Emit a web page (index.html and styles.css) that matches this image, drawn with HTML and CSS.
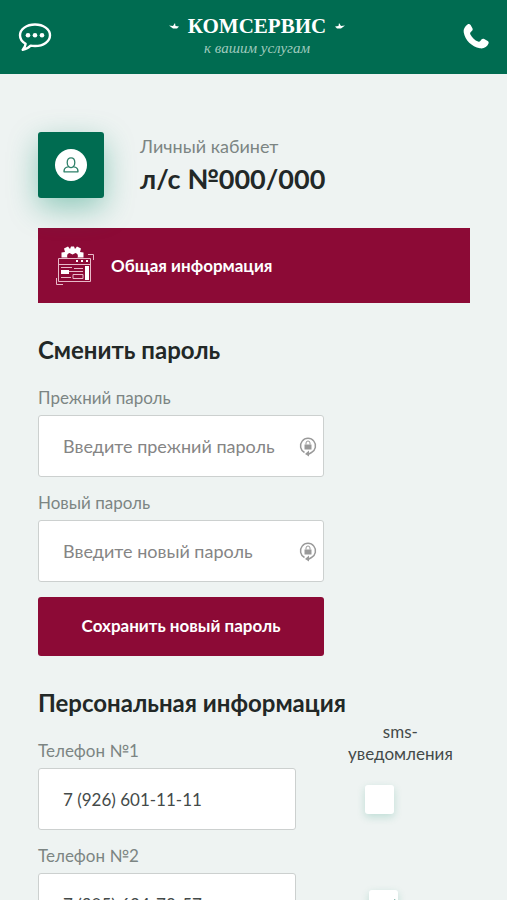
FILE: index.html
```html
<!DOCTYPE html>
<html lang="ru">

<head>
    <meta charset="UTF-8">
    <meta name="viewport" content="width=device-width, initial-scale=1.0">
    <title>Личный кабинет</title>
    <link rel="stylesheet" href="styles.css">
</head>

<body>
    <header class="header">
        <button class="header-btn" type="button" aria-label="Чат">
            <svg width="34" height="30" viewBox="0 0 34 30">
                <path d="M17 2.500C8.500 2.500 2 7.200 2 13.300c0 3.600 2.200 6.600 5.600 8.500-.2 2.200-1.300 4.200-2.900 6 3.200-.4 6-1.800 8-4.200 1.400.3 2.800.4 4.300.4 8.500 0 15-4.600 15-10.700S25.500 2.500 17 2.500z" fill="none" stroke="#fff" stroke-width="2.400" stroke-linejoin="round" />
                <circle cx="10" cy="13.200" r="2.300" fill="#fff" />
                <circle cx="17" cy="13.200" r="2.300" fill="#fff" />
                <circle cx="24" cy="13.200" r="2.300" fill="#fff" />
            </svg>
        </button>
        <a class="logo" href="#">
            <span class="logo-name">
                <svg width="10" height="6" viewBox="0 0 10 6"><path d="M0 2.500l4 .5 2-3 .5 3 3.500.5L8 5.500H4z" fill="#fff" /></svg>
                КОМСЕРВИС
                <svg width="10" height="6" viewBox="0 0 10 6"><path d="M10 2.500L6 3 4 0l-.5 3-3.500.5 2 2h4z" fill="#fff" /></svg>
            </span>
            <span class="logo-text">к вашим услугам</span>
        </a>
        <a class="header-btn" href="tel:" aria-label="Позвонить">
            <svg width="28" height="28" viewBox="0 0 28 28">
                <path d="M5.500 1.600C6.500.8 7.800 1 8.600 2.100l1.800 3.200c.6 1.100.3 2-.6 2.700L8.600 9.200c-.6.6-.6 1.400-.2 2.200 1.800 3.400 4.400 5.700 7.700 7.200.9.400 1.600.2 2.200-.5l1.100-1.500c.7-.9 1.800-1.100 2.800-.6l3.500 2c1 .6 1.200 1.600.8 2.600-1.200 3.300-4.800 5.400-8.600 4.700C9.500 23.700 3.200 17.300 1.700 9.300 1.100 6.300 3 3.400 5.500 1.600z" fill="#fff" />
            </svg>
        </a>
    </header>

    <main class="main">
        <div class="profile">
            <div class="profile-icon">
                <svg width="32" height="32" viewBox="0 0 32 32">
                    <circle cx="16" cy="16" r="16" fill="#fff" />
                    <path d="M12.200 13.500c0-3 1.600-4.700 3.800-4.700s3.800 1.700 3.800 4.700c0 2-.6 3.400-1.400 4.100l2.600.9c1.300.5 2 2 2 4.300H9c0-2.300.7-3.800 2-4.300l2.600-.9c-.8-.7-1.400-2.100-1.400-4.100zM13.600 17.600c1.500 1.300 3.300 1.300 4.800 0" fill="none" stroke="#2f8069" stroke-width="1.300" stroke-linejoin="round" />
                </svg>
            </div>
            <div>
                <div class="profile-label">Личный кабинет</div>
                <h1 class="profile-number">л/с №000/000</h1>
            </div>
        </div>

        <a class="tab" href="#">
            <svg width="40" height="40" viewBox="0 0 40 40">
                <path d="M6.500 11.500V6.500L10 6 9 2.500 13 .5l2 2.500 1-2.500h3L20 3l2-2.500 4 2L25 6l3.500.5v5h-6c1-2 0-4-2-4.500l-3 1.500-3-1.500c-2 .5-3 2.500-2 4.500z" fill="#fff" />
                <g fill="none" stroke="#e8b9c8">
                    <path d="M3.500 12.500h32v23h-32zM3.500 18.500h32M33 8.500h5.500V14M1.500 32v6.500H8" />
                    <path d="M6 21.500h11M19 22.500h9M6 31.500h10M18 28.500h10v4H18zM12 25.500h16" />
                </g>
                <path d="M6 24h8v4H6zM30 20h4v14h-4zM21 14h2v2h-2zM26 14h2v2h-2zM31 14h2v2h-2z" fill="#fff" />
            </svg>
            Общая информация
        </a>

        <form>
            <h2 class="title">Сменить пароль</h2>
            <div class="field password">
                <label for="old-password">Прежний пароль</label>
                <input type="password" id="old-password" placeholder="Введите прежний пароль">
                <svg class="lock" width="18" height="22" viewBox="0 0 18 22">
                    <path d="M5.500 16.500a7.500 7.500 0 1 1 7 0L9 18.500" fill="none" stroke="#999" stroke-width="1.500" />
                    <path d="M10 14.500v6L6 18z" fill="#999" />
                    <path d="M5.500 8.500h7v5h-7z" fill="#999" />
                    <path d="M7 8.500V7a2 2 0 0 1 4 0v1.500" fill="none" stroke="#999" />
                </svg>
            </div>
            <div class="field password">
                <label for="new-password">Новый пароль</label>
                <input type="password" id="new-password" placeholder="Введите новый пароль">
                <svg class="lock" width="18" height="22" viewBox="0 0 18 22">
                    <path d="M5.500 16.500a7.500 7.500 0 1 1 7 0L9 18.500" fill="none" stroke="#999" stroke-width="1.500" />
                    <path d="M10 14.500v6L6 18z" fill="#999" />
                    <path d="M5.500 8.500h7v5h-7z" fill="#999" />
                    <path d="M7 8.500V7a2 2 0 0 1 4 0v1.500" fill="none" stroke="#999" />
                </svg>
            </div>
            <button class="save" type="submit">Сохранить новый пароль</button>
        </form>

        <form>
            <h2 class="title title-personal">Персональная информация</h2>
            <div class="row">
                <div class="field">
                    <label for="phone1">Телефон №1</label>
                    <input type="tel" id="phone1" value="7 (926) 601-11-11">
                </div>
                <div class="sms">
                    <label for="sms1">sms-<br>уведомления</label>
                    <input type="checkbox" id="sms1">
                </div>
            </div>
            <div class="row row-next">
                <div class="field">
                    <label for="phone2">Телефон №2</label>
                    <input type="tel" id="phone2" value="7 (905) 624-78-57">
                </div>
                <div class="sms">
                    <input type="checkbox" id="sms2" aria-label="sms-уведомления" checked>
                </div>
            </div>
        </form>
    </main>
</body>

</html>
```
FILE: styles.css
```css
* {
    box-sizing: border-box;
}

body {
    margin: 0;
    background-color: #eef3f2;
    color: #222827;
    font-family: Lato, "Open Sans", sans-serif;
    font-size: 17px;
    line-height: 22px;
}

.header {
    display: flex;
    justify-content: space-between;
    align-items: center;
    height: 74px;
    padding: 0 17px 0 18px;
    background-color: #006c51;
}

.header-btn {
    display: flex;
    padding: 0;
    border: none;
    background: none;
    cursor: pointer;
}

.logo {
    display: flex;
    flex-direction: column;
    align-items: center;
    padding-bottom: 2px;
    color: #fff;
    font-family: "Liberation Serif", serif;
    text-decoration: none;
}

.logo-name {
    display: flex;
    align-items: center;
    gap: 9px;
    font-size: 21px;
    font-weight: bold;
    line-height: 24px;
}

.logo-text {
    color: #9fcabd;
    font-size: 15px;
    font-style: italic;
    line-height: 20px;
}

.main {
    padding: 58px 37px 30px 38px;
}

.profile {
    display: flex;
    gap: 36px;
    margin-bottom: 30px;
}

.profile-icon {
    display: flex;
    justify-content: center;
    align-items: center;
    width: 66px;
    height: 66px;
    border-radius: 3px;
    background-color: #006c51;
    box-shadow: 0 10px 30px rgba(0, 140, 105, 0.4);
}

.profile-label {
    margin-top: 3px;
    color: #7c8583;
    font-size: 18px;
}

.profile-number {
    margin: 6px 0 0;
    font-size: 27px;
    line-height: 32px;
}

.tab {
    display: flex;
    align-items: center;
    gap: 16px;
    height: 75px;
    padding: 0 17px;
    background-color: #8c0a36;
    color: #fff;
    font-weight: bold;
    text-decoration: none;
}

.title {
    margin: 32px 0 22px;
    font-size: 24px;
    line-height: 30px;
}

.title-personal {
    margin-bottom: 3px;
}

.field {
    width: 258px;
}

.password {
    position: relative;
    width: 286px;
    margin-bottom: 15px;
}

.field label {
    display: block;
    margin-bottom: 6px;
    color: #7c8583;
}

.field input {
    display: block;
    width: 100%;
    height: 62px;
    padding: 0 24px;
    border: 1px solid #ccd0cf;
    border-radius: 3px;
    background-color: #fff;
    color: #444a49;
    font: inherit;
}

.field input::placeholder {
    color: #858585;
    font-size: 18px;
}

.lock {
    position: absolute;
    right: 7px;
    bottom: 19px;
}

.save {
    width: 286px;
    height: 59px;
    padding-bottom: 3px;
    border: none;
    border-radius: 3px;
    background-color: #8c0a36;
    color: #fff;
    font: inherit;
    font-weight: bold;
    cursor: pointer;
}

.row {
    display: flex;
    align-items: flex-end;
    gap: 52px;
    margin-bottom: 15px;
}

.row-next {
    gap: 56px;
}

.sms label {
    display: block;
    margin-bottom: 20px;
    color: #444a49;
    text-align: center;
}

.sms input {
    display: block;
    appearance: none;
    width: 29px;
    height: 29px;
    margin: 0 0 16px 17px;
    border-radius: 3px;
    background-color: #fff;
    box-shadow: 0 3px 8px rgba(0, 140, 105, 0.2);
}

.sms input:checked::before {
    content: "";
    display: block;
    width: 9px;
    height: 17px;
    margin-left: 11px;
    border: solid #006c51;
    border-width: 0 3px 3px 0;
    transform: translateY(5px) rotate(40deg);
}
```
